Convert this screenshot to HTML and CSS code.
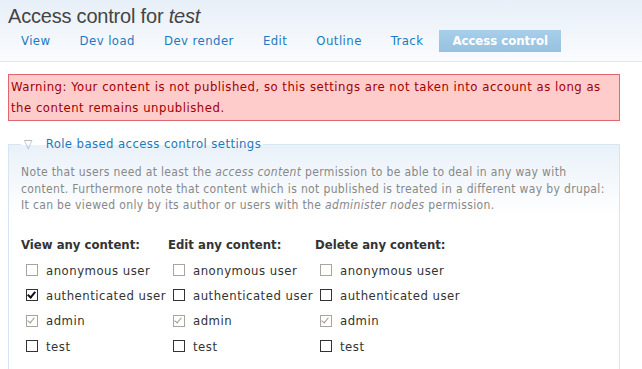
FILE: index.html
```html
<!DOCTYPE html>
<html lang="en">
<head>
  <meta charset="UTF-8"/>
  <title>Access control for test</title>
  <link rel="stylesheet" href="styles.css">
</head>
<body>
<div class="page-head">
  <h1>Access control for <em>test</em></h1>
  <ul class="tabs">
    <li><a href="#">View</a></li>
    <li><a href="#">Dev load</a></li>
    <li><a href="#">Dev render</a></li>
    <li><a href="#">Edit</a></li>
    <li><a href="#">Outline</a></li>
    <li><a href="#">Track</a></li>
    <li class="active"><a href="#">Access control</a></li>
  </ul>
</div>

<div class="content">
  <div class="warning">Warning: Your content is not published, so this settings are not taken into account as long as the content remains unpublished.</div>

  <fieldset class="rbac">
    <legend><span class="toggle">&#9661;</span><a href="#">Role based access control settings</a></legend>
    <p class="note">Note that users need at least the <em>access content</em> permission to be able to deal in any way with content. Furthermore note that content which is not published is treated in a different way by drupal: It can be viewed only by its author or users with the <em>administer nodes</em> permission.</p>

    <div class="perms">
      <div class="perm-col">
        <h4>View any content:</h4>
        <div class="opt"><span class="box off"></span>anonymous user</div>
        <div class="opt"><span class="box on"></span>authenticated user</div>
        <div class="opt"><span class="box off on"></span>admin</div>
        <div class="opt"><span class="box"></span>test</div>
      </div>
      <div class="perm-col">
        <h4>Edit any content:</h4>
        <div class="opt"><span class="box off"></span>anonymous user</div>
        <div class="opt"><span class="box"></span>authenticated user</div>
        <div class="opt"><span class="box off on"></span>admin</div>
        <div class="opt"><span class="box"></span>test</div>
      </div>
      <div class="perm-col">
        <h4>Delete any content:</h4>
        <div class="opt"><span class="box off"></span>anonymous user</div>
        <div class="opt"><span class="box"></span>authenticated user</div>
        <div class="opt"><span class="box off on"></span>admin</div>
        <div class="opt"><span class="box"></span>test</div>
      </div>
    </div>
  </fieldset>
</div>
</body>
</html>
```

FILE: styles.css
```css
*{box-sizing:border-box}
body{margin:0;background:#fff;font-family:"DejaVu Sans Condensed","DejaVu Sans",sans-serif;font-size:13px;color:#333;overflow:hidden}
a{text-decoration:none;color:#1c7ac0}

/* header + tabs */
.page-head{background:linear-gradient(#e7eff8,#fbfcfe 62px);border-bottom:1px solid #e3e7ee;height:62px;padding:4px 0 0 8px}
.page-head h1{margin:0;font:normal 20px/24px "Liberation Sans",Arial,sans-serif;letter-spacing:-.2px;color:#444}
.tabs{list-style:none;margin:2px 0 0;padding:0;display:flex;gap:3px}
.tabs li a{display:block;padding:0 13px;line-height:22px;font-size:13px;letter-spacing:.45px}
.tabs li.active a{background:linear-gradient(#a8cfea,#96c1e0);color:#fff;font-weight:bold;letter-spacing:0}

/* content */
.content{padding:12px 22px 0 8px}
.warning{background:#ffcccc;border:1px solid #e0686c;color:#a00000;padding:1px 2px 2px;line-height:21px;font-size:13px;letter-spacing:.5px}

.rbac{margin:15px 0 0;border:1px solid #d5e5f3;border-bottom:none;padding:0 12px 20px;background:linear-gradient(#e9f1f9,#fff 70px)}
.rbac legend{padding:0 2px 0 3px;font-size:13px;line-height:16px;letter-spacing:.4px}
.toggle{color:#aab;font-size:12px;margin-right:13px}
.note{margin:12px 0 0;color:#888;font-size:12px;line-height:16.5px;letter-spacing:.35px}

.perms{display:grid;grid-template-columns:147px 147px 147px;margin-top:21px}
.perm-col h4{margin:0 0 3px;font-size:13px;line-height:20px;color:#333}
.opt{display:flex;align-items:center;height:25.3px;padding-left:5px;color:#333;white-space:nowrap;letter-spacing:.5px}
.box{width:12px;height:12px;border:1px solid #333;margin-right:8px;flex:none;position:relative;background:#fff}
.box.off{border-color:#aaa49c}
.box.on::after{content:"";position:absolute;left:2px;top:0;width:3px;height:6px;border:solid #111;border-width:0 2px 2px 0;transform:rotate(40deg)}
.box.off.on::after{border-color:#9a958e;border-width:0 1px 1px 0}
```
